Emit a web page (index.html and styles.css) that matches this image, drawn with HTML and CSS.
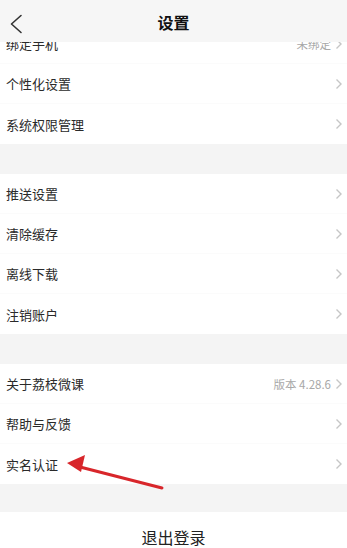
FILE: index.html
```html
<!DOCTYPE html>
<html lang="zh">
<head>
<meta charset="utf-8">
<title>设置</title>
<link rel="stylesheet" href="styles.css">
</head>
<body>
<div class="screen">
  <header class="topbar">
    <svg class="back" width="14" height="20" viewBox="0 0 14 20"><path d="M12 1.5 L2.5 10 L12 18.5" fill="none" stroke="#333" stroke-width="1.6" stroke-linecap="round" stroke-linejoin="round"/></svg>
    <h1 class="title">设置</h1>
  </header>
  <main class="content">
    <section class="group">
      <div class="row"><span class="label">绑定手机</span><span class="value">未绑定</span><svg class="chev" width="8" height="12" viewBox="0 0 8 12"><path d="M1.5 1.5 L6 6 L1.5 10.5" fill="none" stroke="#c6c6c6" stroke-width="1.4"/></svg></div>
      <div class="row"><span class="label">个性化设置</span><svg class="chev" width="8" height="12" viewBox="0 0 8 12"><path d="M1.5 1.5 L6 6 L1.5 10.5" fill="none" stroke="#c6c6c6" stroke-width="1.4"/></svg></div>
      <div class="row"><span class="label">系统权限管理</span><svg class="chev" width="8" height="12" viewBox="0 0 8 12"><path d="M1.5 1.5 L6 6 L1.5 10.5" fill="none" stroke="#c6c6c6" stroke-width="1.4"/></svg></div>
    </section>
    <section class="group">
      <div class="row"><span class="label">推送设置</span><svg class="chev" width="8" height="12" viewBox="0 0 8 12"><path d="M1.5 1.5 L6 6 L1.5 10.5" fill="none" stroke="#c6c6c6" stroke-width="1.4"/></svg></div>
      <div class="row"><span class="label">清除缓存</span><svg class="chev" width="8" height="12" viewBox="0 0 8 12"><path d="M1.5 1.5 L6 6 L1.5 10.5" fill="none" stroke="#c6c6c6" stroke-width="1.4"/></svg></div>
      <div class="row"><span class="label">离线下载</span><svg class="chev" width="8" height="12" viewBox="0 0 8 12"><path d="M1.5 1.5 L6 6 L1.5 10.5" fill="none" stroke="#c6c6c6" stroke-width="1.4"/></svg></div>
      <div class="row"><span class="label">注销账户</span><svg class="chev" width="8" height="12" viewBox="0 0 8 12"><path d="M1.5 1.5 L6 6 L1.5 10.5" fill="none" stroke="#c6c6c6" stroke-width="1.4"/></svg></div>
    </section>
    <section class="group">
      <div class="row"><span class="label">关于荔枝微课</span><span class="value">版本 4.28.6</span><svg class="chev" width="8" height="12" viewBox="0 0 8 12"><path d="M1.5 1.5 L6 6 L1.5 10.5" fill="none" stroke="#c6c6c6" stroke-width="1.4"/></svg></div>
      <div class="row"><span class="label">帮助与反馈</span><svg class="chev" width="8" height="12" viewBox="0 0 8 12"><path d="M1.5 1.5 L6 6 L1.5 10.5" fill="none" stroke="#c6c6c6" stroke-width="1.4"/></svg></div>
      <div class="row"><span class="label">实名认证</span><svg class="chev" width="8" height="12" viewBox="0 0 8 12"><path d="M1.5 1.5 L6 6 L1.5 10.5" fill="none" stroke="#c6c6c6" stroke-width="1.4"/></svg></div>
    </section>
    <div class="logout">退出登录</div>
  </main>
  <svg class="annotation" width="347" height="548" viewBox="0 0 347 548">
    <line x1="162" y1="488" x2="80" y2="467" stroke="#d8262b" stroke-width="3" stroke-linecap="round"/>
    <polygon points="67,463 85,455 81,472" fill="#d8262b"/>
  </svg>
</div>
</body>
</html>
```

FILE: styles.css
```css
* { box-sizing: border-box; }
html, body {
  margin: 0;
  padding: 0;
  background: #ffffff;
}
body {
  font-family: "Noto Sans CJK SC", "Noto Sans", "Liberation Sans", sans-serif;
  color: #222;
}
.screen {
  position: relative;
  width: 347px;
  height: 548px;
  overflow: hidden;
  background: #f4f4f4;
}
.topbar {
  position: absolute;
  top: 0;
  left: 0;
  right: 0;
  height: 42px;
  background: #f6f6f6;
  z-index: 2;
  display: flex;
  align-items: center;
  justify-content: center;
}
.back {
  position: absolute;
  left: 9px;
  top: 14px;
}
.title {
  margin: 2px 0 0 0;
  font-size: 16px;
  font-weight: 700;
  color: #111;
  line-height: 1;
}
.content {
  padding-top: 24px;
  display: flex;
  flex-direction: column;
  gap: 30px;
}
.group {
  background: #fff;
  display: flex;
  flex-direction: column;
}
.row {
  height: 40px;
  display: flex;
  align-items: center;
  padding: 0 4px 0 6px;
  border-bottom: 1px solid #fbfbfb;
}
.row:last-child { border-bottom: none; }
.label {
  flex: 1;
  font-size: 13px;
  color: #2a2a2a;
}
.value {
  font-size: 11.5px;
  color: #a8a8a8;
  margin-right: 4px;
}
.chev {
  display: block;
}
.logout {
  margin-top: -2px;
  background: #fff;
  height: 60px;
  display: flex;
  justify-content: center;
  padding-top: 13px;
  font-size: 16px;
  color: #222;
}
.annotation {
  position: absolute;
  top: 0;
  left: 0;
  pointer-events: none;
  z-index: 3;
}
```
